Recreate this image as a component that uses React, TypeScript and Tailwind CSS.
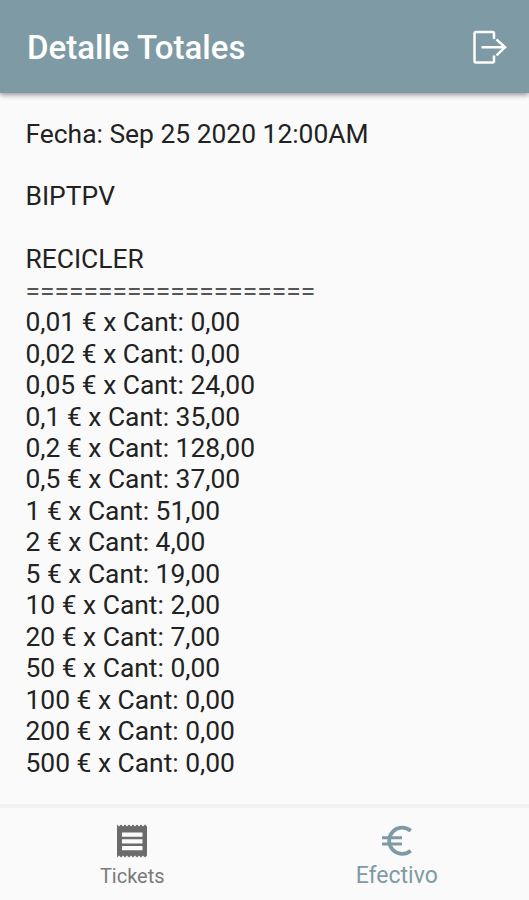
import React, { useState } from 'react';

interface CashLine {
  value: string;
  count: string;
}

const cashLines: CashLine[] = [
  { value: '0,01', count: '0,00' },
  { value: '0,02', count: '0,00' },
  { value: '0,05', count: '24,00' },
  { value: '0,1', count: '35,00' },
  { value: '0,2', count: '128,00' },
  { value: '0,5', count: '37,00' },
  { value: '1', count: '51,00' },
  { value: '2', count: '4,00' },
  { value: '5', count: '19,00' },
  { value: '10', count: '2,00' },
  { value: '20', count: '7,00' },
  { value: '50', count: '0,00' },
  { value: '100', count: '0,00' },
  { value: '200', count: '0,00' },
  { value: '500', count: '0,00' },
];

const ExitIcon = () => (
  <svg width="36" height="36" viewBox="0 0 36 36" fill="none" stroke="currentColor" strokeWidth="2.5">
    <path d="M22 10V4.500a1.500 1.500 0 0 0-1.500-1.500H4a1.500 1.500 0 0 0-1.500 1.500v27.500A1.500 1.500 0 0 0 4 33.500h16.500a1.500 1.500 0 0 0 1.500-1.500V26.500" />
    <path d="M9.500 18.300h23M24.500 10.300l8.500 8-8.500 8" />
  </svg>
);

const TicketIcon = () => (
  <svg width="40" height="40" viewBox="0 0 40 40" fill="currentColor">
    <path
      fillRule="evenodd"
      d="M5 3.500l2 2 2-2 2 2 2-2 2 2 2-2 2 2 2-2 2 2 2-2 2 2 2-2 2 2 2-2 2 2V34.500l-2 2-2-2-2 2-2-2-2 2-2-2-2 2-2-2-2 2-2-2-2 2-2-2-2 2-2-2-2 2z
        M10 11.500v4.200h20.500v-4.200zM10 18.300v4.200h20.500v-4.200zM10 25v4.200h20.500V25z"
    />
  </svg>
);

const EuroIcon = () => (
  <svg width="40" height="40" viewBox="0 0 40 40" fill="none" stroke="currentColor" strokeWidth="3.800">
    <path d="M33.700 9.700A13.100 13.100 0 1 0 33.700 29.700" />
    <path d="M5 16.700h20M5 22.900h20" strokeWidth="3" />
  </svg>
);

export default function App() {
  const [activeTab, setActiveTab] = useState('efectivo');

  return (
    <div className="flex h-screen flex-col bg-[#fafafa] font-['Roboto',sans-serif]">
      <header className="z-10 flex h-[93px] shrink-0 items-center justify-between bg-[#7e9ba5] pl-[27px] pr-[21px] text-white shadow-[0_2px_5px_rgba(0,0,0,0.4)]">
        <h1 className="pt-[2px] text-[33px] font-medium">Detalle Totales</h1>
        <button aria-label="Salir">
          <ExitIcon />
        </button>
      </header>

      <main className="flex-1 whitespace-pre pl-[25.500px] pt-[25.500px] text-[26.400px] leading-[31.450px] text-[#222]">
        <p>Fecha: Sep 25 2020 12:00AM</p>
        <p className="mt-[31.450px]">BIPTPV</p>
        <p className="mt-[31.450px]">RECICLER</p>
        <p className="text-[#555]">====================</p>
        {cashLines.map(line => (
          <p key={line.value}>{line.value} € x Cant: {line.count}</p>
        ))}
      </main>

      <nav className="grid h-[96px] shrink-0 grid-cols-2 border-t-4 border-[#f2f2f2]">
        <button
          onClick={() => setActiveTab('tickets')}
          className={`flex flex-col items-center pt-[13px] ${activeTab === 'tickets' ? 'text-[#7e9ba5]' : 'text-[#6b6b6b]'}`}
        >
          <TicketIcon />
          <span className="pt-px text-[20px] leading-[28px] text-[#7b7b7b]">Tickets</span>
        </button>
        <button
          onClick={() => setActiveTab('efectivo')}
          className={`flex flex-col items-center pt-[13px] ${activeTab === 'efectivo' ? 'text-[#7e9ba5]' : 'text-[#6b6b6b]'}`}
        >
          <EuroIcon />
          <span className="pt-px text-[23px] leading-[28px]">Efectivo</span>
        </button>
      </nav>
    </div>
  );
}
